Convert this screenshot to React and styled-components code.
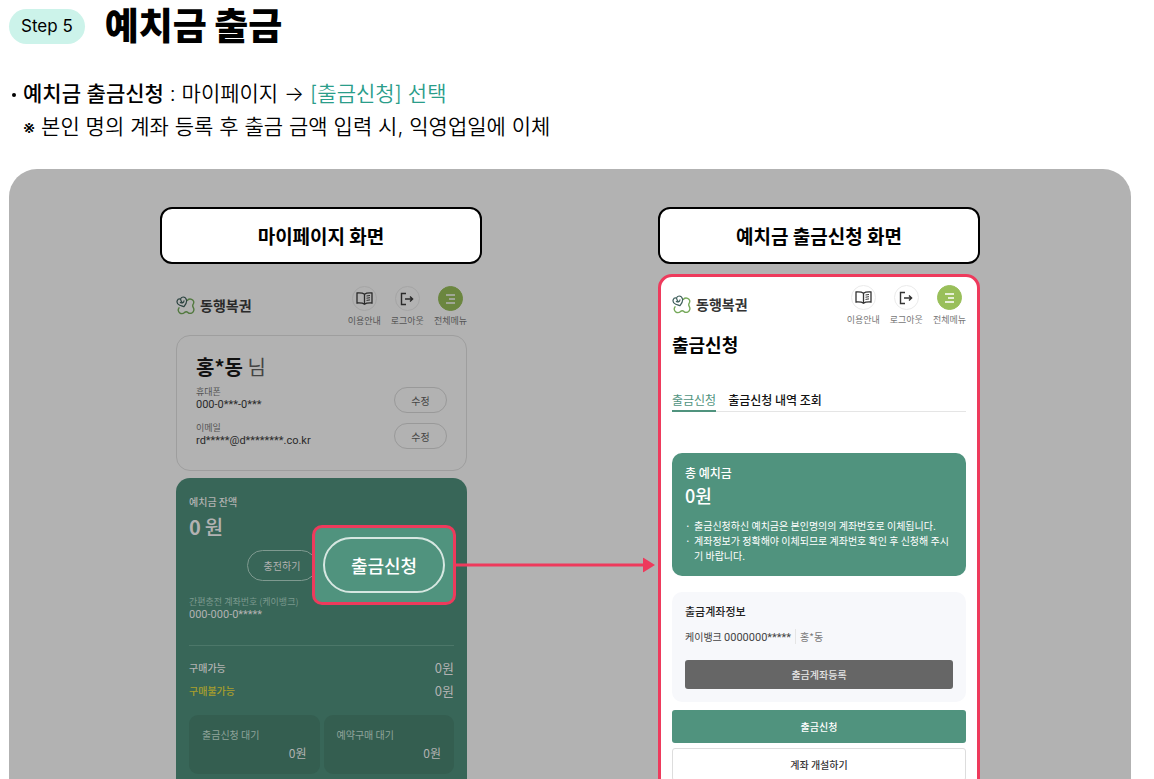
import React from 'react'

import styled, { createGlobalStyle } from 'styled-components'

const GlobalStyle = createGlobalStyle`
    * {
        box-sizing: border-box;
    }

    body {
        margin: 0;
        background: #ffffff;
        color: #000000;
        font-family: "Noto Sans CJK KR", "Noto Sans", sans-serif;
    }

    h1, h2, h3, p, ul, dl, dd {
        margin: 0;
        padding: 0;
    }

    button {
        font-family: inherit;
        cursor: pointer;
    }
`

const light = {
    text: '#333333',
    muted: '#777777',
    leaf: '#76a95a',
    stem: '#3f5f5c',
    circle: '#ffffff',
    circleLine: '#ebebeb',
    menu: '#99bf5a',
    menuLine: '#ffffff',
}

const dim = {
    text: '#2a2a2a',
    muted: '#555555',
    leaf: '#52793f',
    stem: '#2c4341',
    circle: '#b2b2b2',
    circleLine: '#a5a5a5',
    menu: '#6b863f',
    menuLine: '#b2b2b2',
}

const balances = [
    { name: '구매가능', amount: '0원' },
    { name: '구매불가능', amount: '0원', warn: true },
]

const waiting = [
    { name: '출금신청 대기', amount: '0원' },
    { name: '예약구매 대기', amount: '0원' },
]

function Logo({ tone }) {
    return (
        <LogoLink href="#home" tone={tone}>
            <svg width="19" height="19" viewBox="0 0 19 19" fill="none" strokeWidth="1.4" strokeLinecap="round" strokeLinejoin="round" aria-hidden="true">
                <path
                    d="M11.5 4.2C12.4 3.2 14 2.7 15.6 3.3C17.8 4.2 18.3 6.4 17.2 8.2C16.6 9.1 16.6 10.3 17.2 11.3C18.4 13.3 18 15.8 16 16.9C14.4 17.7 12.9 17.4 11.8 16.4C10.8 15.6 9.6 15.6 8.6 16.4C7.3 17.6 5.2 17.9 3.7 16.9C2 15.7 1.8 13.5 3 11.8"
                    stroke={tone.leaf}
                />
                <path
                    d="M10.6 4.3C10.2 2.3 8.8 1 7.1 1C5.7 1 4.8 1.9 4.5 3.1C3.2 2.7 1.7 3.4 1.2 4.8C.6 6.7 1.7 8.4 3.7 9.2C5.3 9.8 7 10.1 8 10.7C9.5 8.8 11 6.9 10.6 4.3ZM4.5 3.1C4.8 4.8 5.4 5.8 6.4 6.9M4.3 6.3C5.5 7.5 7.9 7 8 4.8"
                    stroke={tone.stem}
                    strokeWidth="1.2"
                />
            </svg>
            동행복권
        </LogoLink>
    )
}

function AppHeader({ tone }) {
    return (
        <Header>
            <Logo tone={tone} />
            <Nav>
                <NavButton tone={tone}>
                    <Circle tone={tone}>
                        <svg width="17" height="13" viewBox="0 0 17 13" fill="none" stroke={tone.text} aria-hidden="true">
                            <path d="M8.5 2.2C7 1 4.5 .8 1 1V11C4.5 10.8 7 11 8.5 12.2C10 11 12.5 10.8 16 11V1C12.5 .8 10 1 8.5 2.2V12" strokeWidth="1.3" />
                            <path d="M10.5 4L14 3.5M10.5 6.2L14 5.7M10.5 8.4L14 7.9" strokeWidth="1" />
                        </svg>
                    </Circle>
                    이용안내
                </NavButton>
                <NavButton tone={tone}>
                    <Circle tone={tone}>
                        <svg width="14" height="14" viewBox="0 0 14 14" fill="none" stroke={tone.text} strokeWidth="1.4" aria-hidden="true">
                            <path d="M6 1.5H1.5V12.5H6M5 7H12.5M10 4.5L12.6 7L10 9.5" />
                        </svg>
                    </Circle>
                    로그아웃
                </NavButton>
                <NavButton tone={tone}>
                    <Circle tone={tone} filled>
                        <svg width="12" height="10" viewBox="0 0 12 10" fill="none" stroke={tone.menuLine} strokeWidth="1.3" aria-hidden="true">
                            <path d="M2 1H11M5 5H11M2 9H11" />
                        </svg>
                    </Circle>
                    전체메뉴
                </NavButton>
            </Nav>
        </Header>
    )
}

function MyPage() {
    return (
        <MyPhone>
            <AppHeader tone={dim} />
            <ProfileCard>
                <UserName>홍*동 <span>님</span></UserName>
                <ContactRow>
                    <dl>
                        <dt>휴대폰</dt>
                        <dd>000-0***-0***</dd>
                    </dl>
                    <EditButton>수정</EditButton>
                </ContactRow>
                <ContactRow>
                    <dl>
                        <dt>이메일</dt>
                        <dd>rd*****@d********.co.kr</dd>
                    </dl>
                    <EditButton>수정</EditButton>
                </ContactRow>
            </ProfileCard>
            <BalanceCard>
                <BalanceTitle>예치금 잔액</BalanceTitle>
                <BalanceAmount><span>0</span>원</BalanceAmount>
                <BalanceActions>
                    <ChargeButton>충전하기</ChargeButton>
                    <Callout>
                        <WithdrawButton>출금신청</WithdrawButton>
                        <Arrow>
                            <ArrowLine />
                            <svg width="12" height="15" viewBox="0 0 12 15" aria-hidden="true">
                                <path d="M0 0L12 7.5L0 15Z" fill="#ee3a5c" />
                            </svg>
                        </Arrow>
                    </Callout>
                </BalanceActions>
                <AccountLabel>간편충전 계좌번호 (케이뱅크)</AccountLabel>
                <AccountNumber>000-000-0*****</AccountNumber>
                <Divider />
                {balances.map(b => (
                    <BalanceRow key={b.name} warn={b.warn}>
                        <span>{b.name}</span>
                        <strong>{b.amount}</strong>
                    </BalanceRow>
                ))}
                <WaitingGrid>
                    {waiting.map(w => (
                        <WaitingBox key={w.name}>
                            <span>{w.name}</span>
                            <strong>{w.amount}</strong>
                        </WaitingBox>
                    ))}
                </WaitingGrid>
            </BalanceCard>
        </MyPhone>
    )
}

function WithdrawPage() {
    return (
        <WithdrawPhone>
            <AppHeader tone={light} />
            <PageTitle>출금신청</PageTitle>
            <Tabs>
                <Tab href="#withdraw" active>출금신청</Tab>
                <Tab href="#history">출금신청 내역 조회</Tab>
            </Tabs>
            <TotalCard>
                <TotalTitle>총 예치금</TotalTitle>
                <TotalAmount>0원</TotalAmount>
                <Notes>
                    <li>출금신청하신 예치금은 본인명의의 계좌번호로 이체됩니다.</li>
                    <li>계좌정보가 정확해야 이체되므로 계좌번호 확인 후 신청해 주시기 바랍니다.</li>
                </Notes>
            </TotalCard>
            <AccountCard>
                <h3>출금계좌정보</h3>
                <AccountOwner>
                    케이뱅크 <b>0000000*****</b>
                    <span>홍*동</span>
                </AccountOwner>
                <RegisterButton>출금계좌등록</RegisterButton>
            </AccountCard>
            <SubmitButton>출금신청</SubmitButton>
            <OpenButton>계좌 개설하기</OpenButton>
        </WithdrawPhone>
    )
}

export default function App() {
    return (
        <Page>
            <GlobalStyle />
            <StepHead>
                <StepBadge>Step 5</StepBadge>
                <h1>예치금 출금</h1>
            </StepHead>
            <Guide>
                <li>
                    <p><b>예치금 출금신청</b> : 마이페이지 → <em>[출금신청] 선택</em></p>
                    <p><small>※</small> 본인 명의 계좌 등록 후 출금 금액 입력 시, 익영업일에 이체</p>
                </li>
            </Guide>
            <Stage>
                <section>
                    <ScreenLabel>마이페이지 화면</ScreenLabel>
                    <MyPage />
                </section>
                <section>
                    <ScreenLabel>예치금 출금신청 화면</ScreenLabel>
                    <WithdrawPage />
                </section>
            </Stage>
        </Page>
    )
}


const Page = styled.main`

    display: flex;
    flex-direction: column;

    height: 100vh;
    overflow: hidden;

    padding: 0 23px 0 9px;

`

const StepHead = styled.header`

    display: flex;
    align-items: center;
    gap: 20px;

    height: 53px;

    h1 {
        font-family: Inter, "Noto Sans CJK KR", sans-serif;
        font-size: 37px;
        font-weight: 900;
        line-height: 53px;
    }

`

const StepBadge = styled.span`

    padding: 0 12px;

    background: #ccf3ea;
    border-radius: 18px;

    font-family: Inter, "Noto Sans CJK KR", sans-serif;
    font-size: 17px;
    line-height: 35px;

`

const Guide = styled.ul`

    padding: 24px 0 26px 0;

    list-style: none;

    font-family: Inter, "Noto Sans CJK KR", sans-serif;
    font-size: 21px;
    font-weight: 350;
    line-height: 33px;

    li {
        display: flex;
        flex-direction: column;
        padding-left: 14px;
        position: relative;
    }

    li::before {
        content: "";
        position: absolute;
        left: 3px;
        top: 16px;
        width: 4px;
        height: 4px;
        border-radius: 50%;
        background: #000000;
    }

    b {
        font-weight: 500;
    }

    em {
        color: #2a9d8a;
        font-style: normal;
    }

    small {
        font-size: 19px;
        font-weight: 400;
        line-height: 1;
    }

`

const Stage = styled.div`

    flex: 1;
    min-height: 0;

    display: grid;
    grid-template-columns: 1fr 1fr;
    column-gap: 176px;

    padding: 38px 151px 0 151px;

    background: #b2b2b2;
    border-radius: 28px 28px 0 0;

`

const ScreenLabel = styled.h2`

    margin-bottom: 10px;

    background: #ffffff;
    border: 2px solid #000000;
    border-radius: 12px;

    font-size: 19px;
    font-weight: 700;
    line-height: 53px;
    text-align: center;

`

const MyPhone = styled.div`

    padding: 12px 15px 0 16px;

`

const WithdrawPhone = styled.div`

    height: 600px;

    padding: 8px 11px 0 11px;

    background: #ffffff;
    border: 3px solid #ee3a5c;
    border-radius: 14px;

`

const Header = styled.div`

    display: flex;
    justify-content: space-between;

    height: 49px;

`

const LogoLink = styled.a`

    display: flex;
    align-items: center;
    gap: 5px;

    height: 38px;

    color: ${props => props.tone.text};

    font-size: 14px;
    font-weight: 700;
    text-decoration: none;

`

const Nav = styled.nav`

    display: flex;
    align-items: flex-start;
    gap: 10px;

`

const NavButton = styled.button`

    display: flex;
    flex-direction: column;
    align-items: center;
    gap: 3px;

    padding: 0;

    background: none;
    border: 0;
    color: ${props => props.tone.muted};

    font-size: 9px;
    line-height: 14px;

`

const Circle = styled.span`

    display: flex;
    align-items: center;
    justify-content: center;

    width: 25px;
    height: 25px;

    background: ${props => props.filled ? props.tone.menu : props.tone.circle};
    border: 1px solid ${props => props.filled ? props.tone.menu : props.tone.circleLine};
    border-radius: 50%;

`

const ProfileCard = styled.div`

    height: 136px;

    padding: 16px 19px;

    border: 1px solid #9e9e9e;
    border-radius: 14px;

`

const UserName = styled.h3`

    color: #111111;

    font-size: 20px;
    font-weight: 700;
    line-height: 30px;

    span {
        color: #444444;
        font-weight: 400;
    }

`

const ContactRow = styled.div`

    display: flex;
    align-items: center;
    justify-content: space-between;

    height: 36px;

    dl {
        padding-bottom: 3px;
    }

    dt {
        color: #555555;
        font-size: 9px;
        line-height: 12px;
    }

    dd {
        color: #2a2a2a;
        font-family: Roboto, "Noto Sans CJK KR", sans-serif;
        font-size: 11px;
        line-height: 14px;
    }

`

const EditButton = styled.button`

    width: 53px;
    height: 26px;

    background: none;
    border: 1px solid #999999;
    border-radius: 13px;
    color: #444444;

    font-size: 10px;

`

const BalanceCard = styled.div`

    margin-top: 7px;
    padding: 17px 13px;

    background: #386658;
    border-radius: 14px 14px 0 0;
    color: #b2b2b2;

`

const BalanceTitle = styled.h3`

    font-size: 10px;
    font-weight: 500;
    line-height: 14px;

`

const BalanceAmount = styled.p`

    display: flex;
    gap: 4px;

    font-size: 20px;
    font-weight: 500;
    line-height: 36px;

    span {
        font-weight: 700;
    }

`

const BalanceActions = styled.div`

    display: flex;
    align-items: center;
    justify-content: flex-end;

    height: 40px;

`

const ChargeButton = styled.button`

    width: 70px;
    height: 31px;

    background: none;
    border: 1px solid #7f9a90;
    border-radius: 16px;
    color: #b2b2b2;

    font-size: 10px;

`

const Callout = styled.div`

    position: relative;
    flex: none;

    margin: 0 -2px 0 -5px;
    padding: 9px 8px;

    background: #50937e;
    border: 3px solid #ee3a5c;
    border-radius: 10px;

`

const WithdrawButton = styled.button`

    display: block;

    width: 122px;
    height: 56px;

    background: none;
    border: 2px solid #d6e7e1;
    border-radius: 28px;
    color: #ffffff;

    font-size: 18px;
    font-weight: 500;

`

/* runs from the callout across the gap between the two screens */
const Arrow = styled.div`

    position: absolute;
    top: 50%;
    left: 100%;

    display: flex;
    align-items: center;

    width: 202px;

    transform: translateY(-50%);

`

const ArrowLine = styled.span`

    flex: 1;
    height: 3px;

    background: #ee3a5c;

`

const AccountLabel = styled.p`

    margin-top: 11px;

    color: #7b998e;

    font-size: 9px;
    line-height: 12px;

`

const AccountNumber = styled.p`

    font-family: Roboto, "Noto Sans CJK KR", sans-serif;
    font-size: 11px;
    line-height: 13px;

`

const Divider = styled.hr`

    margin: 24px 0 10px 0;

    border: 0;
    border-top: 1px solid #4c7769;

`

const BalanceRow = styled.div`

    display: flex;
    align-items: center;
    justify-content: space-between;

    height: 23px;

    span {
        color: ${props => props.warn ? '#a99f2c' : '#b2b2b2'};
        font-size: 10px;
        font-weight: 500;
    }

    strong {
        font-size: 13px;
        font-weight: 400;
    }

`

const WaitingGrid = styled.div`

    display: grid;
    grid-template-columns: 1fr 1fr;
    gap: 4px;

    margin-top: 13px;

`

const WaitingBox = styled.div`

    display: flex;
    flex-direction: column;

    padding: 12px 13px;

    background: #345e50;
    border-radius: 9px;

    span {
        color: #8fa49b;
        font-size: 10px;
        line-height: 16px;
    }

    strong {
        align-self: flex-end;
        font-size: 12px;
        font-weight: 400;
        line-height: 19px;
    }

`

const PageTitle = styled.h2`

    font-size: 18px;
    font-weight: 700;
    line-height: 20px;

`

const Tabs = styled.nav`

    display: flex;
    gap: 12px;

    margin: 35px 0 41px 0;

    border-bottom: 1px solid #e5e5e5;

`

const Tab = styled.a`

    margin-bottom: -1px;

    border-bottom: 2px solid ${props => props.active ? '#50937e' : 'transparent'};
    color: ${props => props.active ? '#50937e' : '#111111'};

    font-size: 12px;
    font-weight: ${props => props.active ? 400 : 500};
    line-height: 21px;
    text-decoration: none;

`

const TotalCard = styled.div`

    padding: 11px 13px 13px 13px;

    background: #50937e;
    border-radius: 10px;
    color: #ffffff;

`

const TotalTitle = styled.h3`

    font-size: 12px;
    font-weight: 500;
    line-height: 18px;

`

const TotalAmount = styled.p`

    font-size: 18px;
    font-weight: 500;
    line-height: 27px;

`

const Notes = styled.ul`

    margin-top: 9px;

    list-style: none;

    font-size: 10px;
    line-height: 15px;

    li {
        display: flex;
    }

    li::before {
        content: "·";
        flex: none;
        width: 9px;
    }

`

const AccountCard = styled.div`

    margin: 16px 0 8px 0;
    padding: 10px 13px 13px 13px;

    background: #f7f8fb;
    border-radius: 10px;

    h3 {
        color: #222222;
        font-size: 11px;
        font-weight: 500;
        line-height: 18px;
    }

`

const AccountOwner = styled.p`

    margin: 8px 0 13px 0;

    color: #444444;

    font-size: 10px;
    line-height: 18px;

    b {
        font-family: Roboto, "Noto Sans CJK KR", sans-serif;
        font-size: 11px;
        font-weight: 400;
    }

    span {
        margin-left: 4px;
        padding-left: 4px;
        border-left: 1px solid #e5e5e5;
        color: #777777;
    }

`

const ActionButton = styled.button`

    display: block;

    width: 100%;

    border: 0;
    border-radius: 3px;

    font-size: 10px;
    font-weight: 500;

`

const RegisterButton = styled(ActionButton)`

    height: 29px;

    background: #666666;
    color: #e5e5e5;

`

const SubmitButton = styled(ActionButton)`

    height: 33px;

    background: #50937e;
    color: #ffffff;

`

const OpenButton = styled(ActionButton)`

    height: 33px;

    margin-top: 5px;

    background: #ffffff;
    border: 1px solid #dddddd;
    color: #333333;

`
